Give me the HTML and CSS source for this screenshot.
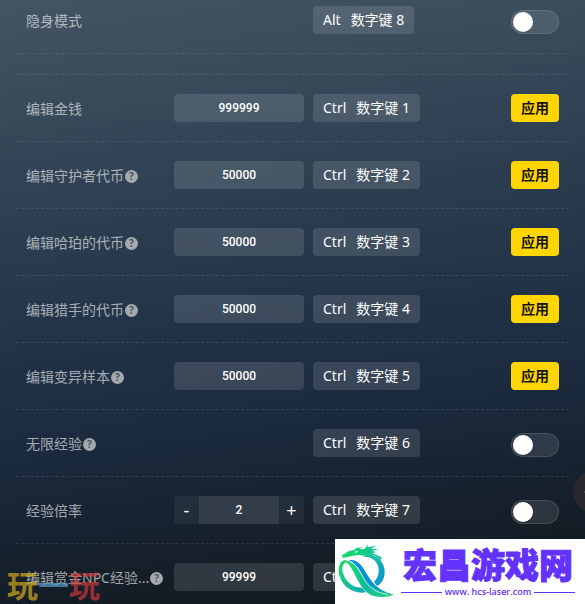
FILE: index.html
```html
<!DOCTYPE html>
<html lang="zh-CN">
<head>
<meta charset="utf-8">
<meta name="viewport" content="width=device-width, initial-scale=1">
<title>编辑</title>
<link rel="stylesheet" href="styles.css">
</head>
<body>
<main class="panel">
  <section class="group group-first">
    <div class="row">
      <div class="name"><label for="stealth">隐身模式</label></div>
      <div class="keys"><kbd>Alt</kbd><kbd>数字键 8</kbd></div>
      <input class="switch" id="stealth" type="checkbox" role="switch">
    </div>
  </section>
  <section class="group">
    <div class="row">
      <div class="name"><label for="money">编辑金钱</label></div>
      <input class="field" id="money" type="text" value="999999">
      <div class="keys"><kbd>Ctrl</kbd><kbd>数字键 1</kbd></div>
      <button class="apply" type="button">应用</button>
    </div>
    <div class="row">
      <div class="name"><label for="guardian">编辑守护者代币</label><span class="help">?</span></div>
      <input class="field" id="guardian" type="text" value="50000">
      <div class="keys"><kbd>Ctrl</kbd><kbd>数字键 2</kbd></div>
      <button class="apply" type="button">应用</button>
    </div>
    <div class="row">
      <div class="name"><label for="harper">编辑哈珀的代币</label><span class="help">?</span></div>
      <input class="field" id="harper" type="text" value="50000">
      <div class="keys"><kbd>Ctrl</kbd><kbd>数字键 3</kbd></div>
      <button class="apply" type="button">应用</button>
    </div>
    <div class="row">
      <div class="name"><label for="hunter">编辑猎手的代币</label><span class="help">?</span></div>
      <input class="field" id="hunter" type="text" value="50000">
      <div class="keys"><kbd>Ctrl</kbd><kbd>数字键 4</kbd></div>
      <button class="apply" type="button">应用</button>
    </div>
    <div class="row">
      <div class="name"><label for="mutation">编辑变异样本</label><span class="help">?</span></div>
      <input class="field" id="mutation" type="text" value="50000">
      <div class="keys"><kbd>Ctrl</kbd><kbd>数字键 5</kbd></div>
      <button class="apply" type="button">应用</button>
    </div>
    <div class="row">
      <div class="name"><label for="infinite">无限经验</label><span class="help">?</span></div>
      <div class="keys"><kbd>Ctrl</kbd><kbd>数字键 6</kbd></div>
      <input class="switch" id="infinite" type="checkbox" role="switch">
    </div>
    <div class="row">
      <div class="name"><label id="rate-label" for="rate">经验倍率</label></div>
      <div class="stepper">
        <button class="step" type="button">-</button>
        <input class="field" id="rate" type="text" value="2">
        <button class="step" type="button">+</button>
      </div>
      <div class="keys"><kbd>Ctrl</kbd><kbd>数字键 7</kbd></div>
      <input class="switch" type="checkbox" role="switch" aria-labelledby="rate-label">
    </div>
    <div class="row">
      <div class="name"><label for="bounty">编辑赏金NPC经验...</label><span class="help">?</span></div>
      <input class="field" id="bounty" type="text" value="99999">
      <div class="keys"><kbd>Ctrl</kbd></div>
    </div>
  </section>
</main>

<svg class="floater" viewBox="0 0 12 42" aria-hidden="true">
  <circle cx="21" cy="21" r="21" fill="#29282c"/>
  <path d="M11 21H12" stroke="#66666a" stroke-width="1"/>
</svg>

<div class="mark"><span class="mark-gold">玩</span><span class="mark-blue">一</span><span class="mark-red">玩</span></div>

<aside class="banner">
  <svg class="dragon" viewBox="0 3 210 195" aria-hidden="true">
    <defs>
      <linearGradient id="ring" x1="0" y1="0" x2="1" y2="1">
        <stop offset="0" stop-color="#18dc70"/><stop offset="1" stop-color="#0fa8b8"/>
      </linearGradient>
      <linearGradient id="arc" x1="0" y1="0" x2="1" y2="1">
        <stop offset="0" stop-color="#1fc890"/><stop offset="1" stop-color="#0791d6"/>
      </linearGradient>
      <linearGradient id="head" x1="0" y1="0" x2="1" y2="0">
        <stop offset="0" stop-color="#12df64"/><stop offset="1" stop-color="#18bd9c"/>
      </linearGradient>
      <linearGradient id="tail" x1="0" y1="0" x2="1" y2="1">
        <stop offset="0" stop-color="#1be464"/><stop offset="0.6" stop-color="#11b99f"/><stop offset="1" stop-color="#22d07c"/>
      </linearGradient>
    </defs>
    <path fill="url(#ring)" d="M30 66C14 68 8 90 13 112C22 146 56 170 93 163L81 149C52 150 29 128 23 102C20 86 24 75 36 71Z"/>
    <path fill="url(#arc)" d="M94 48C128 49 150 74 149 104C148 124 139 137 126 144L117 131C130 119 135 98 128 81C120 63 106 56 84 56Z"/>
    <path fill="#078fdc" d="M42 67C62 63 77 77 90 99C108 130 128 160 177 169C131 170 105 151 88 123C74 98 65 77 42 67Z"/>
    <path fill="url(#tail)" d="M14 77C27 60 49 67 63 85C85 113 96 157 177 170C151 179 119 181 97 164C71 143 60 102 42 80C32 68 23 70 14 77Z"/>
    <path fill="none" stroke="#fff" stroke-width="2" d="M45 71C70 79 78 113 98 139C114 158 134 166 158 169"/>
    <path fill="url(#head)" d="M18 53L42 39L57 36L65 30L82 28L74 33L88 34L99 18L97 28L124 23L107 32L131 33L111 39L126 42L112 45L140 58L137 68C124 51 106 45 83 53C67 48 52 56 37 57L20 61L25 55Z"/>
    <path fill="#fff" d="M57 42L70 38L64 44Z"/>
  </svg>
  <div class="brand">
    <strong class="brand-name">宏昌游戏网</strong>
    <span class="brand-url">www. hcs-laser.com</span>
  </div>
</aside>
</body>
</html>
```
FILE: styles.css
```css
* {
  box-sizing: border-box;
}

body {
  margin: 0;
  height: 100vh;
  overflow: hidden;
  position: relative;
  color: #fff;
  font: 14px/20px "Noto Sans", "Noto Sans CJK SC", sans-serif;
  background: linear-gradient(172deg, #445465 0%, #314354 26%, #243549 48%, #1b293d 68%, #151f29 86%, #10161c 100%);
}

button,
input {
  margin: 0;
  padding: 0;
  border: 0;
  color: inherit;
  font: inherit;
}

.panel {
  padding: 0 16px;
}

.group {
  border-top: 1px dashed rgba(255, 255, 255, 0.1);
}

.group-first {
  border-top: 0;
  margin: -13px 0 20px;
}

.row {
  display: grid;
  grid-template-columns: 139px 130px 1fr auto;
  column-gap: 9px;
  align-items: center;
  height: 67px;
  padding: 0 10px;
  border-bottom: 1px dashed rgba(255, 255, 255, 0.1);
}

.name {
  display: flex;
  align-items: center;
  gap: 1px;
  padding-top: 2px;
  color: rgba(255, 255, 255, 0.6);
  white-space: nowrap;
}

.help {
  width: 13px;
  height: 13px;
  border-radius: 50%;
  background: #a4a9ae;
  color: #4a545f;
  font-size: 10px;
  font-weight: 700;
  line-height: 13px;
  text-align: center;
}

.field {
  width: 100%;
  height: 28px;
  border-radius: 4px;
  background: rgba(255, 255, 255, 0.12);
  font: 500 12px Roboto, sans-serif;
  text-align: center;
}

.keys {
  grid-column: 3;
  justify-self: start;
  display: flex;
  gap: 10px;
  height: 28px;
  padding: 0 10px;
  border-radius: 4px;
  background: rgba(255, 255, 255, 0.12);
  line-height: 28px;
}

kbd {
  font: inherit;
}

.apply {
  width: 48px;
  height: 28px;
  border-radius: 4px;
  background: #ffd500;
  color: #141414;
  font-weight: 600;
}

.switch {
  appearance: none;
  display: flex;
  align-items: center;
  width: 48px;
  height: 24px;
  margin-top: 4px;
  padding: 0 1px;
  border: 1px solid rgba(255, 255, 255, 0.12);
  border-radius: 12px;
  background: rgba(255, 255, 255, 0.1);
}

.switch::before {
  content: "";
  width: 20px;
  height: 20px;
  border-radius: 50%;
  background: #fff;
}

.switch:checked {
  justify-content: flex-end;
}

.stepper {
  display: grid;
  grid-template-columns: 25px 1fr 25px;
  overflow: hidden;
  border-radius: 4px;
}

.stepper .field {
  border-radius: 0;
}

.step {
  height: 28px;
  background: rgba(255, 255, 255, 0.05);
  font-size: 18px;
}

.floater {
  position: absolute;
  top: 471px;
  right: 0;
  width: 12px;
  height: 42px;
}

.mark {
  position: absolute;
  left: 7px;
  bottom: 4px;
  display: flex;
  font: 700 31px/32px "Noto Sans CJK SC", sans-serif;
  opacity: 0.65;
}

.mark-gold {
  color: #e2b51c;
}

.mark-blue {
  color: #5ca9df;
}

.mark-red {
  color: #d73a3a;
}

.banner {
  position: absolute;
  right: 0;
  bottom: 0;
  display: flex;
  width: 250px;
  height: 65px;
  background: #fff;
  color: #6333fb;
}

.dragon {
  flex: none;
  width: 70px;
  height: 65px;
}

.brand {
  width: 174px;
  margin-left: -4px;
  padding-top: 8px;
}

.brand-name {
  display: block;
  padding-left: 2px;
  font: 900 34px/34px "Noto Sans CJK SC", sans-serif;
  white-space: nowrap;
  -webkit-text-stroke: 1px #6333fb;
}

.brand-url {
  display: flex;
  align-items: center;
  gap: 3px;
  font: 600 9px/22px "Open Sans", sans-serif;
  white-space: nowrap;
}

.brand-url::before,
.brand-url::after {
  content: "";
  flex: 1;
  height: 1px;
  background: #6333fb;
}
```
